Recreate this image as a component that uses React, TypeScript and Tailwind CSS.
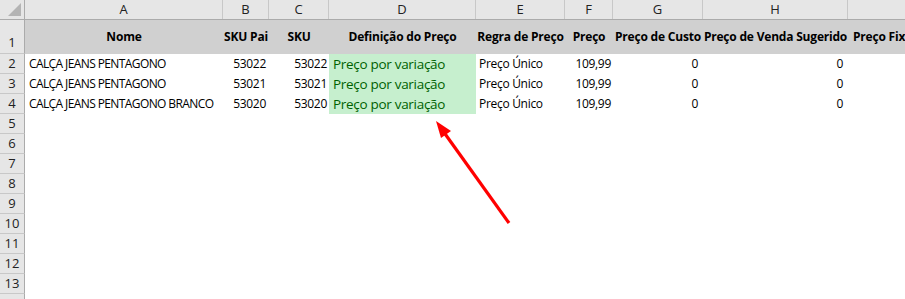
const cols = [
  { key: 'A', w: 198 },
  { key: 'B', w: 46 },
  { key: 'C', w: 60 },
  { key: 'D', w: 147 },
  { key: 'E', w: 89 },
  { key: 'F', w: 48 },
  { key: 'G', w: 90 },
  { key: 'H', w: 145 },
  { key: 'I', w: 200 },
];

const headers = [
  'Nome',
  'SKU Pai',
  'SKU',
  'Definição do Preço',
  'Regra de Preço',
  'Preço',
  'Preço de Custo',
  'Preço de Venda Sugerido',
  'Preço Fixo',
];

const rows = [
  { nome: 'CALÇA JEANS PENTAGONO', pai: '53022', sku: '53022' },
  { nome: 'CALÇA JEANS PENTAGONO', pai: '53021', sku: '53021' },
  { nome: 'CALÇA JEANS PENTAGONO BRANCO', pai: '53020', sku: '53020' },
];

const font = "font-['Open_Sans','Liberation_Sans',sans-serif]";

const RowHead = ({ n, tall }: { n?: number; tall?: boolean }) => (
  <div
    className={`w-[25px] shrink-0 bg-[#e6e6e6] border-r border-r-[#ababab] border-b border-b-[#c8c8c8] flex justify-center text-[13px] text-[#222] ${
      tall ? 'h-[34px] items-end pb-[1px]' : 'h-[20px] items-center'
    }`}
  >
    {n}
  </div>
);

const App = () => {
  return (
    <div className={`relative w-[905px] h-[299px] overflow-hidden bg-white ${font} text-black`}>
      {/* column letters */}
      <div className="flex h-[20px] bg-[#e6e6e6] border-b border-b-[#ababab]">
        <div className="w-[25px] shrink-0 border-r border-r-[#ababab] relative">
          <svg className="absolute right-[3px] bottom-[3px]" width="13" height="13" viewBox="0 0 13 13">
            <polygon points="13,0 13,13 0,13" fill="#b4b4b4" />
          </svg>
        </div>
        {cols.map((c) => (
          <div
            key={c.key}
            style={{ width: c.w }}
            className="shrink-0 border-r border-r-[#c8c8c8] flex items-center justify-center text-[13px] text-[#222]"
          >
            {c.key}
          </div>
        ))}
      </div>

      {/* row 1: titles */}
      <div className="flex">
        <RowHead n={1} tall />
        <div className="flex bg-[#d0d0d0] h-[34px] grow">
          {cols.map((c, i) => (
            <div
              key={c.key}
              style={{ width: c.w }}
              className={`shrink-0 flex items-center text-[12px] font-bold tracking-[-0.2px] whitespace-nowrap ${
                c.key === 'I' ? 'justify-start pl-[5px]' : 'justify-center'
              }`}
            >
              {headers[i]}
            </div>
          ))}
        </div>
      </div>

      {/* data rows */}
      {rows.map((r, idx) => (
        <div key={idx} className="flex">
          <RowHead n={idx + 2} />
          <div className="flex h-[20px] items-center text-[12px] tracking-[-0.3px] whitespace-nowrap">
            <div className="w-[198px] shrink-0 pl-[4px] tracking-[-0.6px]">{r.nome}</div>
            <div className="w-[46px] shrink-0 text-right pr-[3px]">{r.pai}</div>
            <div className="w-[60px] shrink-0 text-right pr-[2px]">{r.sku}</div>
            <div className="w-[147px] h-full shrink-0 bg-[#c6efce] text-[#006100] text-[13.5px] tracking-[-0.3px] pl-[4px] flex items-center">
              Preço por variação
            </div>
            <div className="w-[89px] shrink-0 pl-[3px]">Preço Único</div>
            <div className="w-[48px] shrink-0 text-right pr-[2px]">109,99</div>
            <div className="w-[90px] shrink-0 text-right pr-[5px]">0</div>
            <div className="w-[145px] shrink-0 text-right pr-[5px]">0</div>
          </div>
        </div>
      ))}

      {/* empty rows */}
      {[5, 6, 7, 8, 9, 10, 11, 12, 13].map((n) => (
        <div key={n} className="flex">
          <RowHead n={n} />
        </div>
      ))}
      <div className="flex">
        <RowHead />
      </div>

      {/* red callout arrow */}
      <svg className="absolute left-0 top-0 pointer-events-none" width="905" height="299">
        <line x1="509" y1="223" x2="443" y2="131" stroke="#ff0000" strokeWidth="3.2" />
        <polygon points="436,121 451,131 441,138" fill="#ff0000" />
      </svg>
    </div>
  );
};

export default App;
